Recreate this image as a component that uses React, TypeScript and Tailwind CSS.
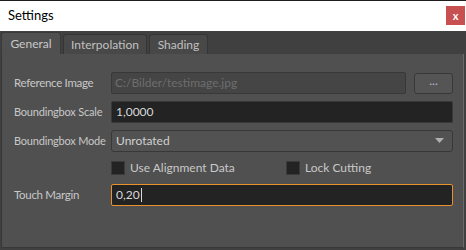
function Checkbox({ label }: { label: string }) {
  return (
    <label className="flex items-center gap-[5px]">
      <span className="block h-[14px] w-[14px] border border-[#3a3a3a] bg-[#232323]" />
      <span>{label}</span>
    </label>
  );
}

export default function App() {
  return (
    <div
      className="h-[250px] w-[466px] overflow-hidden border-t border-[#1e1e1e] bg-[#404040] text-[12px] text-[#c8c8c8]"
      style={{ fontFamily: 'Lato, "Liberation Sans", sans-serif' }}
    >
      {/* title bar */}
      <div className="flex h-[30px] items-center justify-between bg-white pl-[8px] pr-[1px]">
        <span className="text-[13px] text-black">Settings</span>
        <button className="mb-[2px] flex h-[19px] w-[19px] items-center justify-center bg-[#c75050] text-[11px] font-bold leading-none text-white">
          x
        </button>
      </div>

      {/* tabs */}
      <div className="flex h-[23px] items-end gap-[2px] pl-[1px]">
        <div className="flex h-[22px] w-[60px] items-center justify-center rounded-t-[3px] border border-b-0 border-[#3a3a3a] bg-[#505050] text-[#c8c8c8]">
          General
        </div>
        <div className="flex h-[20px] w-[84px] items-center justify-center rounded-t-[3px] border border-b-0 border-[#353535] bg-[#484848] text-[#c0c0c0]">
          Interpolation
        </div>
        <div className="flex h-[20px] w-[59px] items-center justify-center rounded-t-[3px] border border-b-0 border-[#353535] bg-[#484848] text-[#c0c0c0]">
          Shading
        </div>
      </div>

      {/* panel */}
      <div className="ml-[1px] mr-[2px] h-[194px] border border-t-0 border-[#383838] border-r-[#6a6a6a] bg-[#505050] pl-[12px] pr-[10px] pt-[18px]">
        <div className="grid grid-cols-[97px_1fr] items-center gap-y-[7px] whitespace-nowrap">
          <span className="text-[11.5px] tracking-[-0.3px]">Reference Image</span>
          <div className="flex h-[22px] items-center gap-[8px]">
            <div className="flex h-[22px] flex-1 items-center rounded-[2px] border border-[#383838] bg-[#454545] px-[3px] text-[#6e6e6e]">
              C:/Bilder/testimage.jpg
            </div>
            <button className="flex h-[21px] w-[39px] items-center justify-center rounded-[3px] border border-[#383838] bg-[#555555] pb-[4px] text-[#b8c0d0]">
              ...
            </button>
          </div>

          <span className="text-[11px] tracking-[-0.2px]">Boundingbox Scale</span>
          <div className="flex h-[22px] items-center rounded-[2px] border border-[#383838] bg-[#232323] px-[4px] text-[#d8d8d8]">
            1,0000
          </div>

          <span className="text-[11px] tracking-[-0.2px]">Boundingbox Mode</span>
          <div className="flex h-[22px] items-center justify-between rounded-[3px] border border-[#383838] bg-[#525252] pl-[4px] pr-[8px] text-[#d0d0d0]">
            <span>Unrotated</span>
            <svg width="9" height="6" viewBox="0 0 9 6">
              <path d="M0 0 H9 L4.5 5 Z" fill="#b0b0b0" />
            </svg>
          </div>

          <span />
          <div className="flex h-[18px] items-center">
            <div className="w-[175px]">
              <Checkbox label="Use Alignment Data" />
            </div>
            <Checkbox label="Lock Cutting" />
          </div>

          <span className="text-[11.5px] tracking-[-0.3px]">Touch Margin</span>
          <div className="flex h-[22px] items-center rounded-[2px] border border-[#e8922e] bg-[#232323] px-[4px] text-[#d8d8d8]">
            0,20
            <span className="ml-[1px] inline-block h-[14px] w-[1px] bg-[#d8d8d8]" />
          </div>
        </div>
      </div>
    </div>
  );
}
